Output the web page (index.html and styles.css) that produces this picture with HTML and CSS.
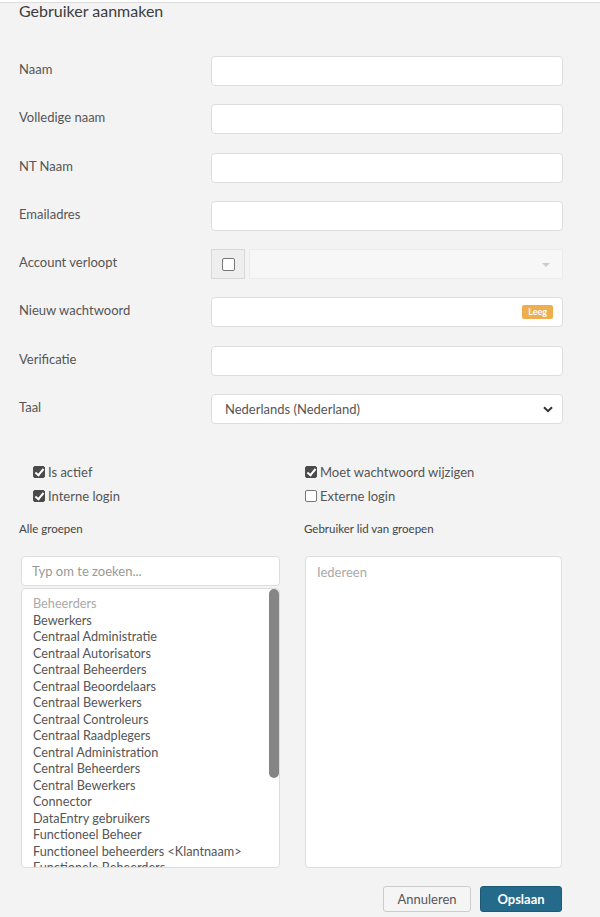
FILE: index.html
```html
<html>
<head>
<link rel="stylesheet" href="styles.css">
</head>
<body>

<div class="dialog">
	<h1 class="dialog-title">Gebruiker aanmaken</h1>

	<div class="form">
		<div class="form-item">
			<label class="label-container">Naam</label>
			<input class="text-input" type="text">
		</div>
		<div class="form-item">
			<label class="label-container">Volledige naam</label>
			<input class="text-input" type="text">
		</div>
		<div class="form-item">
			<label class="label-container">NT Naam</label>
			<input class="text-input" type="text">
		</div>
		<div class="form-item">
			<label class="label-container">Emailadres</label>
			<input class="text-input" type="text">
		</div>
		<div class="form-item">
			<label class="label-container">Account verloopt</label>
			<div class="input-group">
				<span class="addon"><span class="box"></span></span>
				<div class="fake-select">
					<span class="caret"></span>
				</div>
			</div>
		</div>
		<div class="form-item">
			<label class="label-container">Nieuw wachtwoord</label>
			<div class="pw-wrap">
				<input class="text-input" type="password">
				<span class="badge">Leeg</span>
			</div>
		</div>
		<div class="form-item">
			<label class="label-container">Verificatie</label>
			<input class="text-input" type="password">
		</div>
		<div class="form-item">
			<label class="label-container">Taal</label>
			<div class="select-box">
				<span>Nederlands (Nederland)</span>
				<svg class="chevron" width="10" height="7" viewBox="0 0 10 7"><path d="M1 1.2 L5 5.2 L9 1.2" fill="none" stroke="#333" stroke-width="2"/></svg>
			</div>
		</div>
	</div>

	<div class="checks">
		<div class="check-col">
			<div class="check"><span class="cb on"></span>Is actief</div>
			<div class="check"><span class="cb on"></span>Interne login</div>
		</div>
		<div class="check-col">
			<div class="check"><span class="cb on"></span>Moet wachtwoord wijzigen</div>
			<div class="check"><span class="cb"></span>Externe login</div>
		</div>
	</div>

	<div class="groups">
		<div class="group-col">
			<div class="group-title">Alle groepen</div>
			<div class="search">Typ om te zoeken...</div>
			<div class="list-wrap">
				<div class="group-list">
					<div class="item disabled">Beheerders</div>
					<div class="item">Bewerkers</div>
					<div class="item">Centraal Administratie</div>
					<div class="item">Centraal Autorisators</div>
					<div class="item">Centraal Beheerders</div>
					<div class="item">Centraal Beoordelaars</div>
					<div class="item">Centraal Bewerkers</div>
					<div class="item">Centraal Controleurs</div>
					<div class="item">Centraal Raadplegers</div>
					<div class="item">Central Administration</div>
					<div class="item">Central Beheerders</div>
					<div class="item">Central Bewerkers</div>
					<div class="item">Connector</div>
					<div class="item">DataEntry gebruikers</div>
					<div class="item">Functioneel Beheer</div>
					<div class="item">Functioneel beheerders &lt;Klantnaam&gt;</div>
					<div class="item">Functionele Beheerders</div>
				</div>
				<div class="scroll-thumb"></div>
			</div>
		</div>
		<div class="group-col right">
			<div class="group-title">Gebruiker lid van groepen</div>
			<div class="member-box">
				<div class="placeholder">Iedereen</div>
			</div>
		</div>
	</div>

	<div class="buttons">
		<button class="btn btn-cancel">Annuleren</button>
		<button class="btn btn-save">Opslaan</button>
	</div>
</div>

</body>
</html>
```

FILE: styles.css
```css
body {
    margin: 0;
    background: #f3f3f3;
    font-family: Lato, "Noto Sans", sans-serif;
    color: #555;
}

.dialog {
    border-top: 2px solid #fff;
    box-shadow: inset 0 1px 0 #dcdcdc;
    padding: 0 37px 0 19px;
    width: 600px;
    height: 915px;
    box-sizing: border-box;
}

.dialog-title {
    margin: 0;
    font-size: 16px;
    font-weight: normal;
    color: #3d3d3d;
    line-height: 18px;
    height: 54px;
}

.form-item {
    display: flex;
    align-items: center;
    height: 30px;
    margin-bottom: 18.3px;
}

.label-container {
    width: 192px;
    font-size: 13px;
    color: #555;
    margin-top: -4px;
}

.text-input {
    width: 352px;
    height: 30px;
    border: 1px solid #ddd;
    border-radius: 4px;
    background: #fff;
    box-sizing: border-box;
    outline: none;
}

.input-group {
    display: flex;
    width: 352px;
    height: 30px;
}

.addon {
    width: 34px;
    height: 30px;
    box-sizing: border-box;
    background: #eee;
    border: 1px solid #d8d8d8;
    display: flex;
    align-items: center;
    justify-content: center;
    margin-right: 4px;
}

.addon .box {
    width: 11px;
    height: 11px;
    border: 1px solid #777;
    border-radius: 2px;
    background: #fff;
}

.fake-select {
    flex: 1;
    background: #f7f7f7;
    border: 1px solid #ececec;
    border-radius: 2px;
    position: relative;
}

.caret {
    position: absolute;
    right: 12px;
    top: 13px;
    border-left: 4px solid transparent;
    border-right: 4px solid transparent;
    border-top: 4px solid #ccc;
}

.pw-wrap {
    position: relative;
}

.badge {
    position: absolute;
    right: 10px;
    top: 8px;
    background: #f0ad4e;
    color: #fff;
    font-size: 9px;
    font-weight: bold;
    padding: 2px 6px;
    border-radius: 2px;
    line-height: 10px;
}

.select-box {
    width: 352px;
    height: 30px;
    box-sizing: border-box;
    border: 1px solid #ddd;
    border-radius: 4px;
    background: #fff;
    display: flex;
    align-items: center;
    justify-content: space-between;
    padding: 0 9px 0 13px;
    font-size: 13px;
    color: #555;
}

.checks {
    display: flex;
    margin-top: 39px;
    padding-left: 14px;
}

.check-col {
    width: 272px;
    flex-shrink: 0;
}

.check {
    display: flex;
    align-items: center;
    font-size: 13px;
    color: #555;
    height: 18px;
    margin-bottom: 6px;
}

.cb {
    width: 12px;
    height: 12px;
    box-sizing: border-box;
    border: 1px solid #777;
    border-radius: 2px;
    margin-right: 3px;
    background: #fff;
    position: relative;
}

.cb.on {
    background: #4a4a4a;
    border-color: #4a4a4a;
}

.cb.on:after {
    content: "";
    position: absolute;
    left: 3px;
    top: 0px;
    width: 3px;
    height: 7px;
    border: solid #fff;
    border-width: 0 2px 2px 0;
    transform: rotate(40deg);
}

.groups {
    display: flex;
    margin-top: 11px;
}

.group-col {
    width: 259px;
    padding-left: 2px;
}

.group-col.right {
    margin-left: 25px;
    width: 257px;
    padding-left: 0;
}

.group-title {
    font-size: 11.5px;
    color: #444;
    height: 16px;
    margin-bottom: 18px;
    margin-left: -2px;
}

.group-col.right .group-title {
    margin-left: -1px;
}

.search {
    height: 30px;
    box-sizing: border-box;
    border: 1px solid #ddd;
    border-radius: 4px;
    background: #fff;
    font-size: 13px;
    color: #999;
    padding: 6px 10px;
    margin-bottom: 2px;
}

.list-wrap {
    position: relative;
}

.group-list {
    height: 280px;
    box-sizing: border-box;
    border: 1px solid #ddd;
    border-radius: 4px;
    background: #fff;
    padding: 6px 0 0 11px;
    overflow: hidden;
}

.scroll-thumb {
    position: absolute;
    right: 1px;
    top: 1px;
    width: 10px;
    height: 189px;
    background: #858585;
    border-radius: 5px;
}

.item {
    font-size: 12.7px;
    line-height: 16.5px;
    color: #555;
    white-space: nowrap;
}

.item.disabled {
    color: #aaa;
}

.member-box {
    height: 312px;
    box-sizing: border-box;
    border: 1px solid #ddd;
    border-radius: 4px;
    background: #fff;
    padding: 7px 11px;
}

.placeholder {
    font-size: 13px;
    color: #aaa;
}

.buttons {
    display: flex;
    justify-content: flex-end;
    gap: 9px;
    margin-top: 18px;
    padding-right: 1px;
}

.btn {
    font-family: Lato, "Noto Sans", sans-serif;
    font-size: 13px;
    height: 26px;
    border-radius: 3px;
    padding: 0;
}

.btn-cancel {
    width: 88px;
    background: #f5f5f5;
    border: 1px solid #ccc;
    color: #555;
}

.btn-save {
    width: 82px;
    background: #236a8b;
    border: 1px solid #1d5a77;
    color: #fff;
    font-weight: bold;
}
```
